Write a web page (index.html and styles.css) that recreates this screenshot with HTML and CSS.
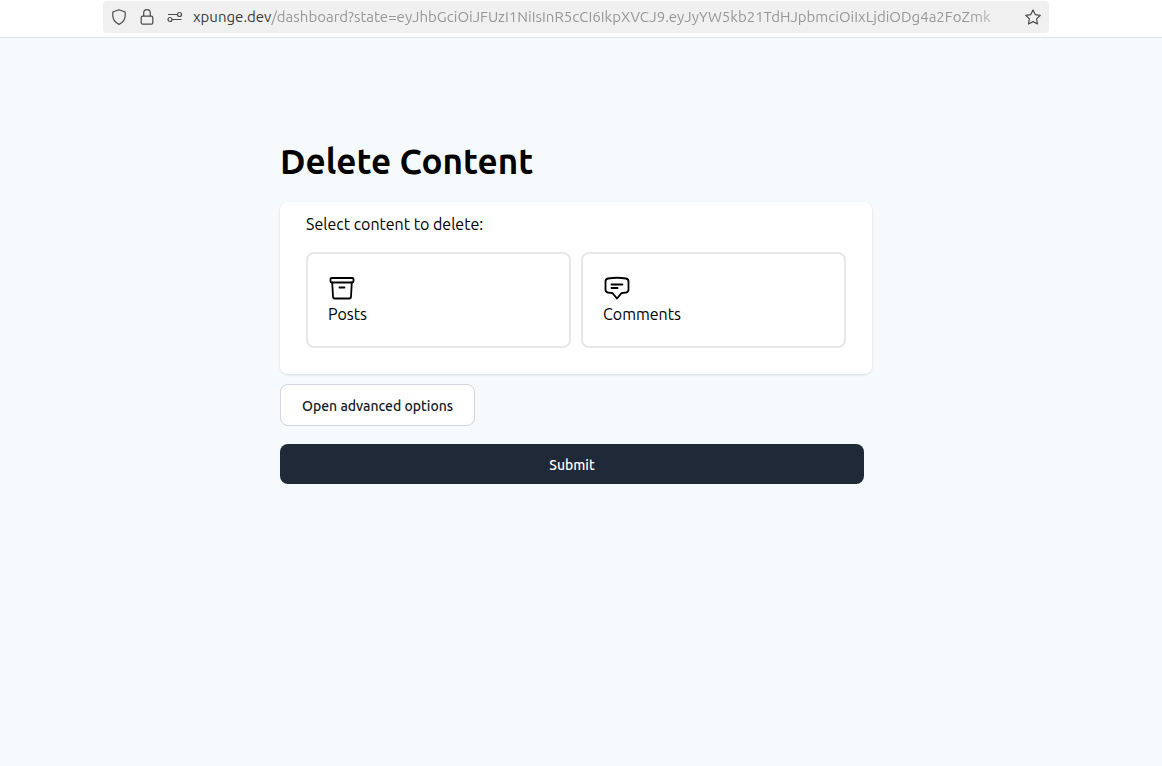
FILE: index.html
```html
<!DOCTYPE html>
<html lang="en">
<head>
    <meta charset="UTF-8">
    <meta name="viewport" content="width=device-width, initial-scale=1.0">
    <title>Delete Content</title>
    <link rel="stylesheet" href="styles.css">
</head>
<body>
    <header class="toolbar">
        <div class="url-bar">
            <svg class="bar-icon" viewBox="0 0 16 16"><path d="M8 .8 14.2 3v3.6c0 4.2-2.6 7.2-6.2 8.8-3.600-1.600-6.200-4.600-6.200-8.800V3z"/></svg>
            <svg class="bar-icon" viewBox="0 0 16 16"><rect x="2.200" y="7.200" width="11.600" height="8" rx="1.500"/><path d="M4.700 7V4a3.300 3.300 0 0 1 6.600 0v3"/></svg>
            <svg class="bar-icon" viewBox="0 0 16 16"><circle cx="12.500" cy="5.500" r="2"/><circle cx="3" cy="10.500" r="2"/><path d="M1 5.500h9.500M5 10.500h9.500"/></svg>
            <label class="domain" for="url">xpunge.dev</label>
            <input class="path" id="url" type="text" value="/dashboard?state=eyJhbGciOiJFUzI1NiIsInR5cCI6IkpXVCJ9.eyJyYW5kb21TdHJpbmciOiIxLjdiODg4a2FoZmk" readonly>
            <button class="star" type="button" aria-label="Bookmark">
                <svg class="bar-icon" viewBox="0 0 16 16"><path d="m8 .9 2.200 4.700 5.100.7-3.700 3.600.9 5.100L8 12.600 3.500 15l.9-5.100L.7 6.300l5.100-.7z"/></svg>
            </button>
        </div>
    </header>
    <main class="main-wrapper">
        <form class="content">
            <h1>Delete Content</h1>
            <fieldset class="card">
                <p class="card-title">Select content to delete:</p>
                <div class="options">
                    <label class="option">
                        <input type="checkbox" name="posts">
                        <svg viewBox="0 0 28 28"><rect x="2.500" y="4" width="23" height="4.500" rx="1.200"/><path d="M4.200 8.500 5 22.500a2 2 0 0 0 2 2h14a2 2 0 0 0 2-2l.8-14M11.500 13.500h5"/></svg>
                        <span>Posts</span>
                    </label>
                    <label class="option">
                        <input type="checkbox" name="comments">
                        <svg viewBox="0 0 28 28"><path d="M5 4.500q9-1.500 18 0 2.500.5 2.500 3v8q0 2.500-2.500 3l-4.500.7L14 24.500l-4.500-5.300-4.500-.7q-2.500-.5-2.500-3v-8q0-2.500 2.500-3zM8.500 10.500h11M8.500 14h6"/></svg>
                        <span>Comments</span>
                    </label>
                </div>
            </fieldset>
            <button class="advanced-btn" type="button">Open advanced options</button>
            <button class="submit-btn" type="submit">Submit</button>
        </form>
    </main>
</body>
</html>
```

FILE: styles.css
```css
*{
    box-sizing: border-box;
    margin: 0;
    padding: 0;
}
body{
    min-height: 100vh;
    background: #f6fafd;
    color: black;
    font-family: Ubuntu, 'Noto Sans', 'Open Sans', sans-serif;
    font-size: 16px;
    line-height: 24px;
}
button, input{
    font: inherit;
}
button{
    cursor: pointer;
}
.toolbar{
    padding: 1px 113px 4px 103px;
    background: white;
    border-bottom: 1px solid #e0e2e6;
}
.url-bar{
    display: flex;
    align-items: center;
    height: 32px;
    padding: 0 8px;
    background: #f0f0f0;
    border-radius: 4px;
    font-size: 15px;
}
.bar-icon{
    flex: none;
    display: block;
    width: 16px;
    height: 16px;
    margin-right: 12px;
    fill: none;
    stroke: #4a4a4a;
    stroke-width: 1.2;
    stroke-linejoin: round;
}
.domain{
    margin-left: -2px;
    color: #3a3a3a;
}
.path{
    flex: 1;
    min-width: 0;
    border: none;
    outline: none;
    background: transparent;
    color: #979797;
    mask-image: linear-gradient(to right, black calc(100% - 48px), transparent);
}
.star{
    margin-left: 8px;
    border: none;
    background: transparent;
}
.star .bar-icon{
    margin-right: 0;
}
.main-wrapper{
    padding: 103px 10px 40px 0;
}
.content{
    width: 100%;
    max-width: 592px;
    margin: 0 auto;
}
.content h1{
    margin-bottom: 21px;
    font-size: 35px;
    font-weight: 700;
    line-height: 40px;
}
.card{
    padding: 10px 26px 26px;
    margin-bottom: 10px;
    border: none;
    border-radius: 8px;
    background: white;
    box-shadow: 0 1px 3px rgba(0, 0, 0, .12);
}
.card-title{
    margin-bottom: 16px;
}
.options{
    display: grid;
    grid-template-columns: 1fr 1fr;
    gap: 10px;
}
.option{
    padding: 20px;
    border: 2px solid #e5e7eb;
    border-radius: 8px;
    cursor: pointer;
}
.option input{
    position: absolute;
    opacity: 0;
}
.option:has(input:checked){
    border-color: #1f2937;
}
.option svg{
    display: block;
    width: 28px;
    height: 28px;
    fill: none;
    stroke: black;
    stroke-width: 1.800;
    stroke-linecap: round;
    stroke-linejoin: round;
}
.option span{
    display: block;
}
.advanced-btn, .submit-btn{
    display: block;
    border-radius: 8px;
    font-size: 14px;
    font-weight: 500;
    line-height: 20px;
}
.advanced-btn{
    height: 42px;
    padding: 1px 21px 0;
    margin-bottom: 18px;
    border: 1px solid #d1d5db;
    background: white;
    color: #111827;
}
.submit-btn{
    width: calc(100% - 8px);
    height: 40px;
    padding-top: 1px;
    border: none;
    background: #1f2937;
    color: white;
}
.submit-btn:hover{
    background: #374151;
}
```
